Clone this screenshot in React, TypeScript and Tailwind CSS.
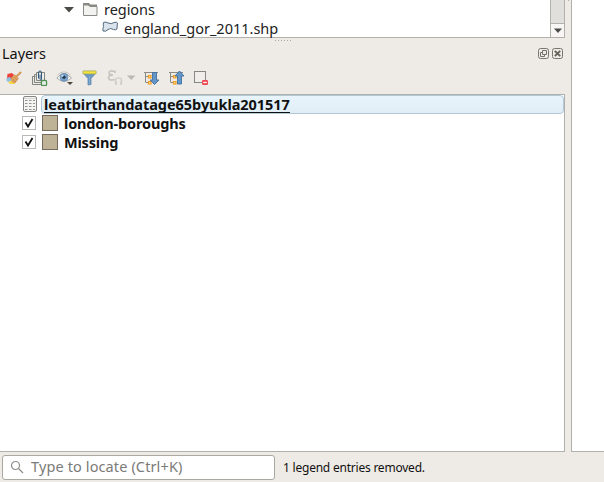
import React from 'react';

const Broom = () => (
  <svg width="16" height="16" viewBox="0 0 16 16">
    <path d="M1.500 4l4.500-1 2 2-3 4-4-1z" fill="#ee4038" />
    <path d="M.5 8L4 7l2 3-3 2-2.500-1z" fill="#8fc0e2" />
    <path d="M2 12l4-1.500 4 2L8 14H4z" fill="#f5d54a" />
    <path d="M5 8.500L8.500 4.500l4 4L9 13l-3-1.500z" fill="#e3a562" stroke="#c08040" strokeWidth=".5" />
    <path d="M6.500 8.500l3 3.500M8 7l3 3" stroke="#b97a3c" strokeWidth=".6" />
    <path d="M10.500 6.500L14.500 2.500" stroke="#d49a58" strokeWidth="2" strokeLinecap="round" />
  </svg>
);

const AddGroup = () => (
  <svg width="16" height="16" viewBox="0 0 16 16" fill="none">
    <path d="M3.500 6.500h-3v8h8.500M5.500 4.500h-3v8h7" stroke="#82847f" />
    <path d="M4.500 2.500h8v8h-8z" fill="#eeeeec" stroke="#82847f" />
    <path d="M6.500 8.500V2.500a1.500 1.500 0 0 1 3 0v7a1 1 0 0 1-1.500 0V4.500" stroke="#30577c" />
    <rect x="9.500" y="10.500" width="5" height="5" rx="1" fill="#fff" stroke="#4e9056" strokeWidth="1.400" />
    <path d="M12 11.200v3.600M10.200 13h3.600" stroke="#d5ead7" />
  </svg>
);

const Eye = () => (
  <svg width="18" height="16" viewBox="0 0 18 16" fill="none">
    <path d="M.8 8Q7.500-.5 15.500 8 8 15 .8 8z" fill="#f8f8f6" stroke="#a9a9a5" />
    <path d="M1.500 5Q8-1.500 14.500 5" stroke="#c5c3bf" />
    <circle cx="8" cy="7.300" r="4" fill="#7ba3c9" stroke="#6288ad" strokeWidth=".7" />
    <circle cx="8" cy="7.300" r="1.700" fill="#203b58" />
    <circle cx="6.500" cy="5.800" r="1" fill="#d5e4f0" />
    <path d="M11 12h6l-3 3z" fill="#494640" />
  </svg>
);

const Filter = () => (
  <svg width="15" height="16" viewBox="0 0 15 16">
    <path d="M1.500 3.500h12L9 8.500v6L6 15V8.500z" fill="#6998c5" stroke="#6288ae" strokeWidth=".8" />
    <path d="M7.500 6v8" stroke="#83abd1" />
    <rect x=".9" y=".9" width="13.200" height="3" rx=".5" fill="#f4e638" stroke="#a7a361" strokeWidth=".8" />
  </svg>
);

const Expression = () => (
  <svg width="30" height="18" viewBox="0 0 30 18" fill="none">
    <path d="M8 4V2.500Q2 .8 2 4 2 6 6 6 1.500 6 1.500 8.800 1.500 12 7.500 10.500" stroke="#c6c4c0" strokeWidth="1.700" />
    <path d="M8.500 13.500V11q0-2 2-2h2q2 0 2 2v2.500" stroke="#c9c7c3" strokeWidth="1.200" />
    <path d="M7.800 12h2.200v4H8.800q-1 0-1-1zM13 12h2.200v3q0 1-1 1H13z" fill="#d3d1cd" />
    <path d="M20 6.500h8.500l-4.250 4.500z" fill="#bbb9b4" />
  </svg>
);

const TreeArrow = ({ up = false }: { up?: boolean }) => (
  <svg width="16" height="16" viewBox="0 0 16 16" fill="none">
    <path d="M1.500 2v10.500M0 2.500h14M2 6.500h3M2 12.500h3" stroke="#8a8984" />
    <path d="M4.500 5.500h2.500v2.500H4.500zM4.500 11.500h2.500V14H4.500z" fill="#ffe18b" stroke="#f39a21" strokeWidth="1.200" />
    <path d={up ? 'M10.500 1L15 6h-2.500v8h-4V6H6z' : 'M8.500 2.500h4V10H15l-4.500 4.500L6 10h2.500z'} fill="#6496c8" stroke="#416f9e" strokeWidth=".9" />
  </svg>
);

const RemoveLayer = () => (
  <svg width="15" height="16" viewBox="0 0 15 16" fill="none">
    <rect x=".5" y="1.500" width="11" height="11" fill="#efeeeb" stroke="#878784" />
    <rect x="8" y="10" width="6" height="5" rx="1.200" fill="#ef4852" />
    <path d="M9.200 12.500h3.600" stroke="#fff" strokeWidth="1.200" />
  </svg>
);

const PanelButton = ({ close = false }: { close?: boolean }) => (
  <svg width="11" height="12" viewBox="0 0 11 12" fill="none">
    <rect x=".5" y=".5" width="10" height="10" rx="2" stroke="#777770" />
    {close ? (
      <path d="M2.800 2.800l5.400 5.400M8.200 2.800L2.800 8.200" stroke="#62625b" strokeWidth="1.900" />
    ) : (
      <path d="M4.500 2.500h4v4h-4zM4 4.500H2.500v4h4V7" stroke="#73736c" />
    )}
  </svg>
);

const Down = ({ small = false }: { small?: boolean }) => (
  <svg width={small ? 8 : 10} height="6" viewBox="0 0 10 6">
    <path d="M0 0h10L5 5.500z" fill="#4a4a46" />
  </svg>
);

const LayerRow = ({ name, tracking }: { name: string; tracking: string }) => (
  <div className="flex h-[19px] items-center pl-[22px]">
    <svg className="-mt-px shrink-0" width="14" height="14" viewBox="0 0 14 14" fill="none">
      <rect x=".5" y=".5" width="13" height="13" fill="#fff" stroke="#bbb9b5" />
      <path d="M3.500 6.500l2.500 4L10.500 3" stroke="#111" strokeWidth="1.800" />
    </svg>
    <span className="-mt-px ml-[6px] size-4 shrink-0 border border-[#756a5b] bg-[#beb297]" />
    <span className={`ml-[6px] whitespace-nowrap text-[14.500px] leading-[19px] font-bold ${tracking}`}>{name}</span>
  </div>
);

export default function App() {
  return (
    <main className="flex h-[482px] w-[604px] flex-col overflow-hidden bg-[#eeebe6] font-['Noto_Sans','Open_Sans',sans-serif] text-[#111]">
      <div className="flex h-[452px]">
        <div className="flex w-[565px] flex-col">
          <section className="flex h-[38px] border-r border-b border-[#b2b0ab] bg-white">
            <div className="flex min-w-0 flex-1 flex-col text-[14.500px] text-[#222]">
              <div className="flex h-[19px] items-center pl-[64px]">
                <Down />
                <svg className="ml-[9px]" width="15" height="15" viewBox="0 0 15 15">
                  <path d="M.5 13.500v-12h5l1.500 3h7v9z" fill="#f2f2f0" stroke="#8a8984" />
                  <path d="M0 1h6l1.500 1.500H14v2H6.500L5 3.500H0z" fill="#8a8984" />
                </svg>
                <span className="ml-[6px] leading-[19px] tracking-[-.05px]">regions</span>
              </div>
              <div className="flex h-[18px] items-center pl-[102px]">
                <svg className="-mt-0.5" width="16" height="12" viewBox="0 0 16 12">
                  <path d="M1.500 1.500Q4 .3 6 2q3.500 1.500 6-.5 3-1 3.500.5-.5 3-.5 6-1.500 1.500-3.500.5-3-2-5.500 0-2 2.500-5 1.500-.5-2 .5-4.500-.5-2.500 0-4z" fill="#d8e3ed" stroke="#53687d" />
                </svg>
                <span className="ml-[6px] leading-[19px]">england_gor_2011.shp</span>
              </div>
            </div>
            <div className="flex w-[14px] flex-col border-l border-[#b2b0ab] bg-[#e1dfdc]">
              <div className="mt-[23px] flex flex-1 items-center justify-center border-t border-[#b2b0ab] bg-[#f7f6f4]"><Down small /></div>
            </div>
          </section>
          <div className="flex h-[6px] gap-[2px] pt-[2px] pl-[275px]">
            {Array.from({ length: 6 }, (_, i) => <i key={i} className="size-px bg-[#aaa8a3]" />)}
          </div>
          <header className="flex h-[20px] items-center pr-[2px] pl-[2px]">
            <h1 className="-mt-[2px] text-[14.500px] leading-5 tracking-[-.05px]">Layers</h1>
            <div className="ml-auto flex gap-[3px]"><PanelButton /><PanelButton close /></div>
          </header>
          <div className="flex h-[30px] items-center pb-[2px] pl-[6px]">
            <Broom />
            <span className="ml-[10px]"><AddGroup /></span>
            <span className="ml-[8px]"><Eye /></span>
            <span className="ml-[8px]"><Filter /></span>
            <span className="ml-[10px]"><Expression /></span>
            <span className="ml-[7px]"><TreeArrow /></span>
            <span className="ml-[9px]"><TreeArrow up /></span>
            <span className="ml-[9px]"><RemoveLayer /></span>
          </div>
          <section className="flex-1 border-t border-r border-b border-[#b2b0ab] bg-white">
            <div className="flex h-[19px] items-center pl-[23px]">
              <svg className="-mt-px shrink-0" width="14" height="16" viewBox="0 0 14 16" fill="none">
                <rect x=".5" y=".5" width="13" height="15" rx="1.500" fill="#f5f5f3" stroke="#858581" />
                <path d="M1 2.500h12" stroke="#d5d5d1" />
                <path d="M2 4.500h2.500M6 4.500h2.500M10 4.500h2M2 7.500h2.500M6 7.500h2.500M10 7.500h2M2 10.500h2.500M6 10.500h2.500M10 10.500h2M2 13.500h2.500M6 13.500h2.500M10 13.500h2" stroke="#92928e" />
              </svg>
              <div className="ml-[4px] flex h-[19px] flex-1 items-center rounded-sm border border-[#b0c8d8] bg-linear-to-b from-[#e8f5fd] to-[#e1edf4] pl-[2px]">
                <span className="border-b border-[#111] text-[14.500px] leading-[16px] font-bold tracking-[-.05px]">leatbirthandatage65byukla201517</span>
              </div>
            </div>
            <LayerRow name="london-boroughs" tracking="tracking-[-.15px]" />
            <LayerRow name="Missing" tracking="tracking-[-.2px]" />
          </section>
        </div>
        <div className="flex w-[6px] justify-center"><i className="size-px bg-[#aaa8a3]" /></div>
        <section className="flex-1 border-b border-l border-[#b2b0ab] bg-white" />
      </div>
      <footer className="flex h-[30px] items-center pl-[2px]">
        <div className="flex h-[25px] w-[273px] items-center rounded-[3px] border border-[#aaa8a3] bg-white pl-[7px] text-[#7b7b78]">
          <svg width="14" height="14" viewBox="0 0 14 14" fill="none">
            <circle cx="5.500" cy="5.500" r="4" stroke="#8b8b88" strokeWidth="1.200" />
            <path d="M8.500 8.500L13 13" stroke="#8b8b88" strokeWidth="1.200" />
          </svg>
          <span className="ml-[7px] text-[14.500px] tracking-[.12px]">Type to locate (Ctrl+K)</span>
        </div>
        <span className="mt-[2px] ml-[8px] text-[12px] tracking-[-.22px]">1 legend entries removed.</span>
      </footer>
    </main>
  );
}
